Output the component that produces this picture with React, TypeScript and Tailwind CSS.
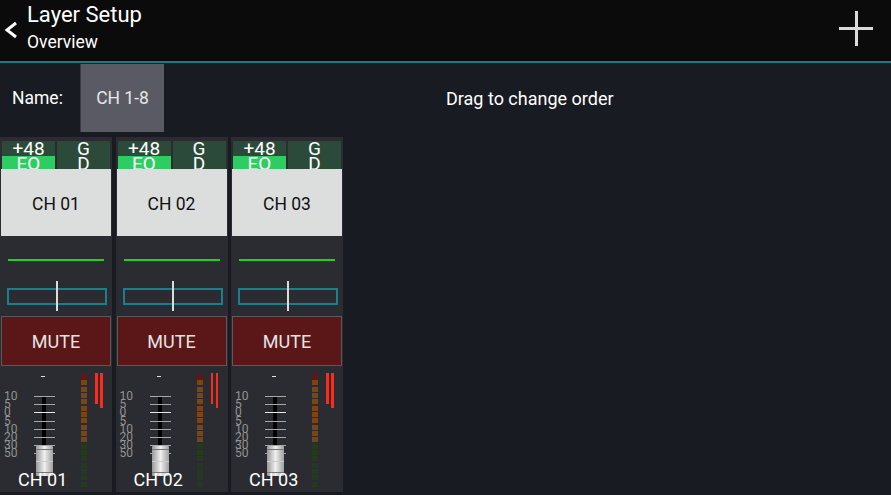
import React from 'react';

const channels = ['CH 01', 'CH 02', 'CH 03'];
const scale = ['10', '5', '0', '5', '10', '20', '30', '50'];

const meterColor = (i: number) => {
  if (i === 0) return 'bg-[#5c1a16]';
  if (i <= 10) return 'bg-[#7c4412]';
  return 'bg-[#25391d]';
};

const Fader: React.FC<{ label: string }> = ({ label }) => (
  <div className="relative h-[124px] overflow-hidden">
    <div className="absolute left-[41px] top-[10px] w-[4px] h-[1px] bg-[#e0e0e0]" />
    <div className="absolute left-[4px] top-[26px] flex flex-col text-[12px] leading-[8.2px] text-[#939393]">
      {scale.map((s, i) => (
        <span key={i}>{s}</span>
      ))}
    </div>
    <div className="absolute left-[42px] top-[30px] w-[4px] h-[52px] bg-black" />
    {scale.map((_, i) => (
      <div
        key={i}
        className={`absolute left-[34px] w-[21px] h-[1px] ${i === 2 ? 'bg-[#e8e8e8]' : 'bg-[#a8a8a8]'}`}
        style={{ top: 30 + i * 8.2 }}
      />
    ))}
    <div className="absolute left-[36px] top-[80px] w-[17px] h-[30px] rounded-[1px] bg-gradient-to-r from-[#9a9a9a] via-[#f0f0f0] to-[#a0a0a0] flex flex-col justify-between py-[3px]">
      <div className="h-[1px] bg-[#777]" />
      <div className="h-[1px] bg-[#ccc]" />
      <div className="h-[1px] bg-[#777]" />
    </div>
    <div className="absolute left-[81px] top-[8px] flex flex-col gap-[1.33px]">
      {Array.from({ length: 18 }).map((_, i) => (
        <div key={i} className={`w-[6px] h-[5px] ${meterColor(i)}`} />
      ))}
    </div>
    <div className="absolute left-[95px] top-[7px] w-[2.5px] h-[31px] bg-[#ff2a1a]" />
    <div className="absolute left-[100px] top-[7px] w-[2.5px] h-[35px] bg-[#ff2a1a]" />
    <div className="absolute left-[18px] top-[103px] text-[18px] leading-[22px] text-white">{label}</div>
  </div>
);

const Strip: React.FC<{ name: string }> = ({ name }) => (
  <div className="w-[112px] h-[355px] bg-[#2a2c31] flex flex-col">
    <div className="pt-[4px] px-[2px] flex flex-col">
      <div className="h-[15px] flex gap-[2px]">
        <div className="flex-1 bg-[#2c4a39] text-center text-[19px] leading-[15px] text-white overflow-hidden">+48</div>
        <div className="flex-1 bg-[#2c4a39] text-center text-[19px] leading-[15px] text-white overflow-hidden">G</div>
      </div>
      <div className="h-[13px] flex gap-[2px]">
        <div className="flex-1 bg-[#2ecc63] text-center text-[19px] leading-[15px] text-white overflow-hidden">EQ</div>
        <div className="flex-1 bg-[#2c4a39] text-center text-[19px] leading-[15px] text-white overflow-hidden">D</div>
      </div>
    </div>
    <div className="mx-[1px] h-[67px] pt-[4px] bg-[#dcdedd] flex items-center justify-center text-[17.5px] text-[#111]">
      {name}
    </div>
    <div className="relative h-[80px]">
      <div className="absolute left-[8px] top-[23px] w-[96px] h-[2px] bg-[#22d11e]" />
      <div className="absolute left-[7px] top-[52px] w-[100px] h-[17px] border-2 border-[#1a7f8c]" />
      <div className="absolute left-[56px] top-[45px] w-[2px] h-[30px] bg-[#dcdcdc]" />
    </div>
    <div className="mx-[1px] h-[50px] bg-[#5b1717] border border-[#5a5a5e] flex items-center justify-center text-[18px] text-[#e4e4e4]">
      MUTE
    </div>
    <Fader label={name} />
  </div>
);

export default function App() {
  return (
    <div className="w-[891px] h-[495px] bg-[#181b22] overflow-hidden font-['Roboto',sans-serif]">
      <div className="h-[61px] bg-[#0b0b0b] flex items-start relative">
        <svg className="absolute left-[3px] top-[21px]" width="16" height="18" viewBox="0 0 16 18">
          <polyline points="13,2 4,9 13,16" fill="none" stroke="#fff" strokeWidth="3" />
        </svg>
        <div className="pl-[27px] pt-[1px] flex flex-col">
          <span className="text-[22px] leading-[28px] text-white">Layer Setup</span>
          <span className="text-[17.5px] leading-[26px] text-white">Overview</span>
        </div>
        <svg className="absolute left-[839px] top-[11px]" width="34" height="35" viewBox="0 0 34 35">
          <rect x="16" y="0" width="3" height="35" fill="#dadada" />
          <rect x="0" y="16" width="34" height="3" fill="#dadada" />
        </svg>
      </div>
      <div className="h-[2px] bg-[#1a7a86]" />
      <div className="flex items-start h-[69px] pt-[1px]">
        <div className="w-[80px] h-[68px] flex items-center pl-[12px] text-[17.5px] text-white">Name:</div>
        <div className="w-[84px] h-[68px] bg-[#5a5a64] border-l border-[#3a3a40] flex items-center justify-center text-[17.5px] text-[#e6e6e6]">
          CH 1-8
        </div>
        <div className="ml-[282px] h-[68px] flex items-center text-[18px] text-white">Drag to change order</div>
      </div>
      <div className="flex gap-[3.5px] mt-[5px]">
        {channels.map((c) => (
          <Strip key={c} name={c} />
        ))}
      </div>
    </div>
  );
}
